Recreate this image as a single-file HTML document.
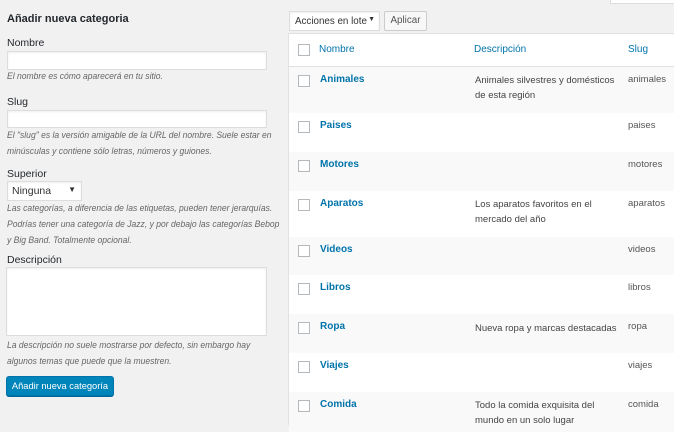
<!DOCTYPE html>
<html><head><meta charset="utf-8"><style>
*{margin:0;padding:0;box-sizing:border-box}
body{width:674px;height:425px;overflow:hidden;background:#f1f1f1;font-family:"Liberation Sans",sans-serif;font-size:11px;color:#444;position:relative}
.a{position:absolute;white-space:nowrap}
.h{font-size:11px;font-weight:bold;color:#23282d}
.lbl{font-size:10.5px;color:#23282d}
.inp{position:absolute;background:#fff;border:1px solid #ddd;box-shadow:inset 0 1px 2px rgba(0,0,0,.07)}
.hint{font-style:italic;color:#666;font-size:9.5px;line-height:16px;white-space:nowrap;transform:scaleX(.9);transform-origin:0 0}
.tbl{position:absolute;left:288px;top:33px;width:386px;height:392px;background:#fff;border-left:1px solid #e1e1e1;border-top:1px solid #e1e1e1}
.row{position:absolute;left:0;width:386px}
.g{background:#f9f9f9}
.cb{position:absolute;left:9px;width:12px;height:12px;border:1px solid #b4b9be;background:#fff}
.nm{position:absolute;left:31px;color:#0073aa;font-weight:bold;font-size:10px}
.ds{position:absolute;left:186px;font-size:9.5px;line-height:15px;color:#444}
.sl{position:absolute;left:339px;font-size:9.5px;color:#555}
</style></head><body>
<div class="a h" style="left:7px;top:13px">Añadir nueva categoria</div>
<div class="a lbl" style="left:7px;top:37px">Nombre</div>
<div class="inp" style="left:7px;top:51px;width:260px;height:19px"></div>
<div class="a hint" style="left:7px;top:69px">El nombre es cómo aparecerá en tu sitio.</div>
<div class="a lbl" style="left:7px;top:96px">Slug</div>
<div class="inp" style="left:7px;top:110px;width:260px;height:18px"></div>
<div class="a hint" style="left:7px;top:128px">El "slug" es la versión amigable de la URL del nombre. Suele estar en<br>minúsculas y contiene sólo letras, números y guiones.</div>
<div class="a lbl" style="left:7px;top:168px">Superior</div>
<div class="inp" style="left:7px;top:181px;width:75px;height:20px;font-size:10.5px;color:#333;padding:3px 4px">Ninguna<span style="position:absolute;right:5px;top:3px;font-size:8px">▼</span></div>
<div class="a hint" style="left:7px;top:201px">Las categorías, a diferencia de las etiquetas, pueden tener jerarquías.<br>Podrías tener una categoría de Jazz, y por debajo las categorías Bebop<br>y Big Band. Totalmente opcional.</div>
<div class="a lbl" style="left:7px;top:254px">Descripción</div>
<div class="inp" style="left:6px;top:267px;width:261px;height:69px"></div>
<div class="a hint" style="left:7px;top:338px">La descripción no suele mostrarse por defecto, sin embargo hay<br>algunos temas que puede que la muestren.</div>
<div class="a" style="left:6px;top:376px;width:108px;height:20px;background:#0085ba;border:1px solid #0073aa;border-radius:3px;color:#fff;font-size:9.3px;text-align:center;line-height:18px;box-shadow:0 1px 0 #006799">Añadir nueva categoría</div>

<div class="a" style="left:610px;top:-1px;width:70px;height:5px;background:#fff;border:1px solid #ddd"></div>
<div class="inp" style="left:289px;top:11px;width:91px;height:20px;font-size:9.8px;color:#333;padding:4px 5px">Acciones en lote<span style="position:absolute;right:4px;top:4px;font-size:7px">▼</span></div>
<div class="a" style="left:384px;top:11px;width:43px;height:20px;background:#f7f7f7;border:1px solid #ccc;border-radius:2px;font-size:9.8px;color:#555;text-align:center;line-height:18px">Aplicar</div>

<div class="tbl">
<div class="row" style="top:0;height:33px;border-bottom:1px solid #e1e1e1"><div class="cb" style="top:10px"></div><div class="a" style="left:30px;top:10px;color:#0073aa;font-size:10px">Nombre</div><div class="a" style="left:185px;top:10px;color:#0073aa;font-size:10px">Descripción</div><div class="a" style="left:339px;top:10px;color:#0073aa;font-size:10px">Slug</div></div>
<div class="row g" style="top:33px;height:46px"><div class="cb" style="top:8px"></div><div class="nm a" style="top:7px">Animales</div><div class="ds a" style="top:6px">Animales silvestres y domésticos<br>de esta región</div><div class="sl a" style="top:7px">animales</div></div>
<div class="row" style="top:79px;height:39px"><div class="cb" style="top:8px"></div><div class="nm a" style="top:7px">Paises</div><div class="sl a" style="top:7px">paises</div></div>
<div class="row g" style="top:118px;height:39px"><div class="cb" style="top:8px"></div><div class="nm a" style="top:7px">Motores</div><div class="sl a" style="top:7px">motores</div></div>
<div class="row" style="top:157px;height:46px"><div class="cb" style="top:8px"></div><div class="nm a" style="top:7px">Aparatos</div><div class="ds a" style="top:6px">Los aparatos favoritos en el<br>mercado del año</div><div class="sl a" style="top:7px">aparatos</div></div>
<div class="row g" style="top:203px;height:38px"><div class="cb" style="top:8px"></div><div class="nm a" style="top:7px">Videos</div><div class="sl a" style="top:7px">videos</div></div>
<div class="row" style="top:241px;height:39px"><div class="cb" style="top:8px"></div><div class="nm a" style="top:7px">Libros</div><div class="sl a" style="top:7px">libros</div></div>
<div class="row g" style="top:280px;height:39px"><div class="cb" style="top:8px"></div><div class="nm a" style="top:7px">Ropa</div><div class="ds a" style="top:7px">Nueva ropa y marcas destacadas</div><div class="sl a" style="top:7px">ropa</div></div>
<div class="row" style="top:319px;height:39px"><div class="cb" style="top:8px"></div><div class="nm a" style="top:7px">Viajes</div><div class="sl a" style="top:7px">viajes</div></div>
<div class="row g" style="top:358px;height:40px"><div class="cb" style="top:8px"></div><div class="nm a" style="top:7px">Comida</div><div class="ds a" style="top:6px">Todo la comida exquisita del<br>mundo en un solo lugar</div><div class="sl a" style="top:7px">comida</div></div>
</div>
</body></html>
